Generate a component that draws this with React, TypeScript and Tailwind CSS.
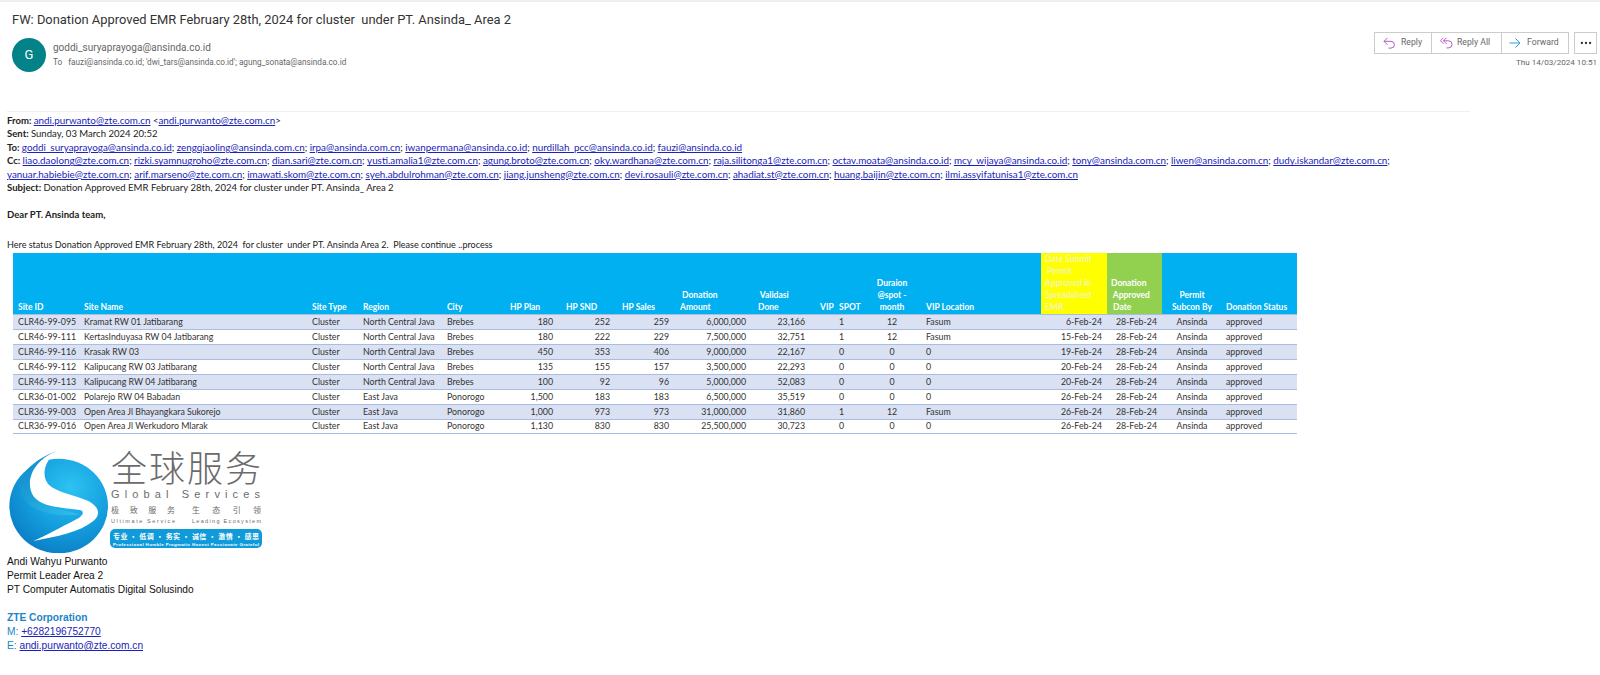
import { MoreHorizontal } from "lucide-react"

type Row = {
  id: string
  name: string
  region: string
  city: string
  plan: string
  snd: string
  sales: string
  amount: string
  done: string
  spot: string
  month: string
  loc: string
  submit: string
  h: string
}

const rows: Row[] = [
  { id: "CLR46-99-095", name: "Kramat RW 01 Jatibarang", region: "North Central Java", city: "Brebes", plan: "180", snd: "252", sales: "259", amount: "6,000,000", done: "23,166", spot: "1", month: "12", loc: "Fasum", submit: "6-Feb-24", h: "h-[15px]" },
  { id: "CLR46-99-111", name: "KertasInduyasa RW 04 Jatibarang", region: "North Central Java", city: "Brebes", plan: "180", snd: "222", sales: "229", amount: "7,500,000", done: "32,751", spot: "1", month: "12", loc: "Fasum", submit: "15-Feb-24", h: "h-[15px]" },
  { id: "CLR46-99-116", name: "Krasak RW 03", region: "North Central Java", city: "Brebes", plan: "450", snd: "353", sales: "406", amount: "9,000,000", done: "22,167", spot: "0", month: "0", loc: "0", submit: "19-Feb-24", h: "h-[15px]" },
  { id: "CLR46-99-112", name: "Kalipucang RW 03 Jatibarang", region: "North Central Java", city: "Brebes", plan: "135", snd: "155", sales: "157", amount: "3,500,000", done: "22,293", spot: "0", month: "0", loc: "0", submit: "20-Feb-24", h: "h-[15px]" },
  { id: "CLR46-99-113", name: "Kalipucang RW 04 Jatibarang", region: "North Central Java", city: "Brebes", plan: "100", snd: "92", sales: "96", amount: "5,000,000", done: "52,083", spot: "0", month: "0", loc: "0", submit: "20-Feb-24", h: "h-[15px]" },
  { id: "CLR36-01-002", name: "Polarejo RW 04 Babadan", region: "East Java", city: "Ponorogo", plan: "1,500", snd: "183", sales: "183", amount: "6,500,000", done: "35,519", spot: "0", month: "0", loc: "0", submit: "26-Feb-24", h: "h-[15px]" },
  { id: "CLR36-99-003", name: "Open Area Jl Bhayangkara Sukorejo", region: "East Java", city: "Ponorogo", plan: "1,000", snd: "973", sales: "973", amount: "31,000,000", done: "31,860", spot: "1", month: "12", loc: "Fasum", submit: "26-Feb-24", h: "h-[15px]" },
  { id: "CLR36-99-016", name: "Open Area Jl Werkudoro Mlarak", region: "East Java", city: "Ponorogo", plan: "1,130", snd: "830", sales: "830", amount: "25,500,000", done: "30,723", spot: "0", month: "0", loc: "0", submit: "26-Feb-24", h: "h-[14px]" },
]

const toList = [
  "goddi_suryaprayoga@ansinda.co.id",
  "zengqiaoling@ansinda.com.cn",
  "irpa@ansinda.com.cn",
  "iwanpermana@ansinda.co.id",
  "nurdillah_pcc@ansinda.co.id",
  "fauzi@ansinda.co.id",
]
const ccOne = [
  "liao.daolong@zte.com.cn",
  "rizki.syamnugroho@zte.com.cn",
  "dian.sari@zte.com.cn",
  "yusti.amalia1@zte.com.cn",
  "agung.broto@zte.com.cn",
  "oky.wardhana@zte.com.cn",
  "raja.silitonga1@zte.com.cn",
  "octav.moata@ansinda.co.id",
  "mcy_wijaya@ansinda.co.id",
  "tony@ansinda.com.cn",
  "liwen@ansinda.com.cn",
  "dudy.iskandar@zte.com.cn",
]
const ccTwo = [
  "yanuar.habiebie@zte.com.cn",
  "arif.marseno@zte.com.cn",
  "imawati.skom@zte.com.cn",
  "syeh.abdulrohman@zte.com.cn",
  "jiang.junsheng@zte.com.cn",
  "devi.rosauli@zte.com.cn",
  "ahadiat.st@zte.com.cn",
  "huang.baijin@zte.com.cn",
  "ilmi.assyifatunisa1@zte.com.cn",
]

function Mail({ children }: { children: string }) {
  return <span className="text-[9.85px] text-[#1a24b8] underline">{children}</span>
}

function MailList({ items, tail }: { items: string[]; tail?: boolean }) {
  return (
    <>
      {items.map((m, i) => (
        <span key={m}>
          <Mail>{m}</Mail>
          {i < items.length - 1 || tail ? "; " : ""}
        </span>
      ))}
    </>
  )
}

function ReplyIcon() {
  return (
    <svg width="13" height="12" viewBox="0 0 13 12" fill="none" stroke="#b55cc4" strokeWidth="1">
      <path d="M4.5 .8 1 4.3l3.5 3.5" />
      <path d="M1 4.3h7a3.4 3.4 0 0 1 3.4 3.4A3.4 3.4 0 0 1 8 11.1H5.5" />
    </svg>
  )
}

function ReplyAllIcon() {
  return (
    <svg width="13" height="12" viewBox="0 0 13 12" fill="none" stroke="#b55cc4" strokeWidth="1">
      <path d="M3.5 .8 .5 3.8l3 3" />
      <path d="M6.5 .8l-3 3 3 3" />
      <path d="M3.5 3.8h5a3.5 3.5 0 0 1 3.5 3.5 3.5 3.5 0 0 1-3.5 3.6H6.5" />
    </svg>
  )
}

function ForwardIcon() {
  return (
    <svg width="12" height="12" viewBox="0 0 12 12" fill="none" stroke="#3a9bd8" strokeWidth="1">
      <path d="M.5 6h10.500" />
      <path d="M6.500 1.500 11 6l-4.500 4.500" />
    </svg>
  )
}

function GlobalServicesLogo() {
  return (
    <svg width="262" height="114" viewBox="0 -9 262 114" className="block">
      <defs>
        <radialGradient id="ball" cx="62%" cy="30%" r="80%">
          <stop offset="0" stopColor="#2cc3f2" />
          <stop offset="0.55" stopColor="#149ddd" />
          <stop offset="1" stopColor="#0a78c2" />
        </radialGradient>
        <linearGradient id="crescent" x1="0" y1="0" x2="1" y2="1">
          <stop offset="0" stopColor="#0f86c9" />
          <stop offset="1" stopColor="#2fc0ee" />
        </linearGradient>
      </defs>
      <g transform="translate(-7 -2) scale(0.3333)">
        <ellipse cx="176" cy="180" rx="148" ry="142" fill="url(#ball)" />
        <path d="M170 15C80 50 40 105 70 155C95 195 160 215 240 205C190 190 120 185 95 145C75 105 105 50 170 15Z" fill="url(#crescent)" />
        <path
          d="M170 15C95 45 75 110 100 150C125 185 190 185 240 192C255 196 250 210 225 222C180 245 135 270 100 285C170 272 240 258 280 225C305 205 295 180 265 165C225 148 170 140 145 115C125 90 130 50 170 15Z"
          fill="#fff"
        />
      </g>
      <g fontFamily="'Noto Sans CJK SC', sans-serif" fill="#6b6b6b">
        <text x="104" y="34" fontSize="36" fontWeight="300" textLength="150" lengthAdjust="spacing">全球服务</text>
        <text x="104" y="50" fontSize="11" fontFamily="'Liberation Sans', sans-serif" textLength="149" lengthAdjust="spacing">Global Services</text>
        <text x="104" y="65" fontSize="8" textLength="64" lengthAdjust="spacing">极致服务</text>
        <text x="185" y="65" fontSize="8" textLength="69" lengthAdjust="spacing">生态引领</text>
        <text x="104" y="75" fontSize="5.5" fontFamily="'Liberation Sans', sans-serif" textLength="64" lengthAdjust="spacing">Ultimate Service</text>
        <text x="185" y="75" fontSize="5.5" fontFamily="'Liberation Sans', sans-serif" textLength="69" lengthAdjust="spacing">Leading Ecosystem</text>
      </g>
      <rect x="103" y="81" width="152" height="19" rx="5" fill="#0f9ad9" />
      <text x="106" y="91" fontSize="7" fontWeight="700" fill="#fff" fontFamily="'Noto Sans CJK SC', sans-serif" textLength="146" lengthAdjust="spacing">专业 · 低调 · 务实 · 诚信 · 激情 · 感恩</text>
      <text x="106" y="98" fontSize="4.4" fontWeight="700" fill="#fff" fontFamily="'Liberation Sans', sans-serif" textLength="146" lengthAdjust="spacing">Professional Humble Pragmatic Honest Passionate Grateful</text>
    </svg>
  )
}

export default function App() {
  const th = "text-[8.5px] font-bold text-white align-bottom pb-[1px] leading-[12px] px-0"
  const td = "px-0 align-middle overflow-hidden whitespace-nowrap"

  return (
    <div className="w-[1600px] h-[675px] bg-white overflow-hidden font-['Lato',sans-serif] text-[#222]">
      <div className="h-[111px] flex justify-between border-t-2 border-[#eeeeee] font-['Roboto',sans-serif]">
        <div className="pl-3 pt-[8px]">
          <h1 className="text-[12.9px] font-normal leading-5 text-[#333] whitespace-pre">
            FW: Donation Approved EMR February 28th, 2024 for cluster  under PT. Ansinda_ Area 2
          </h1>
          <div className="flex mt-[8px]">
            <div className="w-[34px] h-[34px] rounded-full bg-[#038387] text-white text-[13px] flex items-center justify-center">
              G
            </div>
            <div className="ml-[7px] text-[#666]">
              <div className="text-[10px] leading-[14px] mt-[3px]">goddi_suryaprayoga@ansinda.co.id</div>
              <div className="text-[8.2px] leading-[12px] mt-[1px] whitespace-pre">
                To   fauzi@ansinda.co.id; 'dwi_tars@ansinda.co.id'; agung_sonata@ansinda.co.id
              </div>
            </div>
          </div>
        </div>
        <div className="flex flex-col items-end pt-[30px] pr-[3px] text-[#666]">
          <div className="flex gap-[5px]">
            <div className="flex h-[22px] border border-[#cccccc] text-[8.7px]">
              <div className="w-[57px] flex items-center gap-[5px] pl-[8px] border-r border-[#cccccc]">
                <ReplyIcon />
                Reply
              </div>
              <div className="w-[70px] flex items-center gap-[4px] pl-[8px] border-r border-[#cccccc]">
                <ReplyAllIcon />
                Reply All
              </div>
              <div className="w-[66px] flex items-center gap-[6px] pl-[7px]">
                <ForwardIcon />
                Forward
              </div>
            </div>
            <div className="w-[23px] h-[22px] border border-[#cccccc] flex items-center justify-center text-[#333]">
              <MoreHorizontal size={14} strokeWidth={2} />
            </div>
          </div>
          <div className="text-[8.1px] leading-[12px] mt-[2px]">Thu 14/03/2024 10:51</div>
        </div>
      </div>

      <div className="ml-[7px] w-[1463px] border-t border-[#f0f0f0]" />

      <div className="pl-[7px] pt-[2px] text-[9.55px] leading-[13.4px] whitespace-pre">
        <div>
          <b>From: </b>
          <Mail>andi.purwanto@zte.com.cn</Mail> {"<"}
          <Mail>andi.purwanto@zte.com.cn</Mail>
          {">"}
        </div>
        <div>
          <b>Sent: </b>Sunday, 03 March 2024 20:52
        </div>
        <div>
          <b>To: </b>
          <MailList items={toList} />
        </div>
        <div>
          <b>Cc: </b>
          <MailList items={ccOne} tail />
        </div>
        <div>
          <MailList items={ccTwo} />
        </div>
        <div>
          <b>Subject: </b>Donation Approved EMR February 28th, 2024 for cluster under PT. Ansinda_ Area 2
        </div>
        <div className="mt-[13.4px] font-bold">Dear PT. Ansinda team,</div>
        <div className="mt-[17px] text-[9.04px]">
          Here status Donation Approved EMR February 28th, 2024  for cluster  under PT. Ansinda Area 2.  Please continue ..process
        </div>
      </div>

      <table className="ml-[13px] mt-[1px] w-[1284px] table-fixed border-collapse text-[8.8px] leading-[12px] text-[#333] whitespace-pre">
        <colgroup>
          <col className="w-[67px]" />
          <col className="w-[228px]" />
          <col className="w-[51px]" />
          <col className="w-[84px]" />
          <col className="w-[63px]" />
          <col className="w-[56px]" />
          <col className="w-[56px]" />
          <col className="w-[54px]" />
          <col className="w-[77px]" />
          <col className="w-[59px]" />
          <col className="w-[27px]" />
          <col className="w-[27px]" />
          <col className="w-[60px]" />
          <col className="w-[119px]" />
          <col className="w-[66px]" />
          <col className="w-[55px]" />
          <col className="w-[60px]" />
          <col className="w-[75px]" />
        </colgroup>
        <thead>
          <tr className="h-[61px] bg-[#00b0f0]">
            <th className={`${th} text-left pl-[5px]`}>Site ID</th>
            <th className={`${th} text-left pl-[4px]`}>Site Name</th>
            <th className={`${th} text-left pl-[4px]`}>Site Type</th>
            <th className={`${th} text-left pl-[4px]`}>Region</th>
            <th className={`${th} text-left pl-[4px]`}>City</th>
            <th className={`${th} text-left pl-[4px]`}>HP Plan</th>
            <th className={`${th} text-left pl-[4px]`}>HP SND</th>
            <th className={`${th} text-left pl-[4px]`}>HP Sales</th>
            <th className={`${th} text-left pl-[8px]`}>
              {" Donation\nAmount"}
            </th>
            <th className={`${th} text-left pl-[9px]`}>
              {" Validasi\nDone"}
            </th>
            <th className={`${th} text-left pl-[12px]`}>VIP</th>
            <th className={`${th} text-left pl-[4px]`}>SPOT</th>
            <th className={`${th} text-center`}>{"Duraion\n@spot -\nmonth"}</th>
            <th className={`${th} text-left pl-[4px]`}>VIP Location</th>
            <th className={`${th} !bg-[#ffff00] !text-[#f6f6b0] text-left pl-[4px]`}>
              {"Date Submit\n Permit\nApproved in\nSpreadsheet\nEMR"}
            </th>
            <th className={`${th} !bg-[#92d050] text-left pl-[4px]`}>{"Donation\n Approved\n Date"}</th>
            <th className={`${th} text-center`}>{"Permit\nSubcon By"}</th>
            <th className={`${th} text-left pl-[4px]`}>Donation Status</th>
          </tr>
        </thead>
        <tbody>
          {rows.map((r, i) => (
            <tr key={r.id} className={`${r.h} border-t border-[#a9bde3] ${i % 2 === 0 ? "bg-[#d9e1f2]" : "bg-white"}`}>
              <td className={`${td} pl-[5px]`}>{r.id}</td>
              <td className={`${td} pl-[4px]`}>{r.name}</td>
              <td className={`${td} pl-[4px]`}>Cluster</td>
              <td className={`${td} pl-[4px]`}>{r.region}</td>
              <td className={`${td} pl-[4px]`}>{r.city}</td>
              <td className={`${td} pr-[9px] text-right`}>{r.plan}</td>
              <td className={`${td} pr-[8px] text-right`}>{r.snd}</td>
              <td className={`${td} pr-[3px] text-right`}>{r.sales}</td>
              <td className={`${td} pr-[3px] text-right`}>{r.amount}</td>
              <td className={`${td} pr-[3px] text-right`}>{r.done}</td>
              <td className={td} />
              <td className={`${td} pl-[4px]`}>{r.spot}</td>
              <td className={`${td} text-center`}>{r.month}</td>
              <td className={`${td} pl-[4px]`}>{r.loc}</td>
              <td className={`${td} pr-[5px] text-right`}>{r.submit}</td>
              <td className={`${td} pr-[5px] text-right`}>28-Feb-24</td>
              <td className={`${td} text-center`}>Ansinda</td>
              <td className={`${td} pl-[4px]`}>approved</td>
            </tr>
          ))}
        </tbody>
      </table>
      <div className="ml-[13px] w-[1284px] border-t border-[#a9bde3]" />

      <div className="mt-[5px] ml-[7px]">
        <GlobalServicesLogo />
      </div>

      <div className="ml-[7px] mt-[2px] font-['Liberation_Sans',sans-serif] text-[10.2px] leading-[14px] text-[#111]">
        <div>Andi Wahyu Purwanto</div>
        <div>Permit Leader Area 2</div>
        <div>PT Computer Automatis Digital Solusindo</div>
        <div className="mt-[14px] font-bold text-[#1b84c8]">ZTE Corporation</div>
        <div className="text-[#1b84c8]">
          M: <span className="text-[#1a24b8] underline">+6282196752770</span>
        </div>
        <div className="text-[#1b84c8]">
          E: <span className="text-[#1a24b8] underline">andi.purwanto@zte.com.cn</span>
        </div>
      </div>
    </div>
  )
}
